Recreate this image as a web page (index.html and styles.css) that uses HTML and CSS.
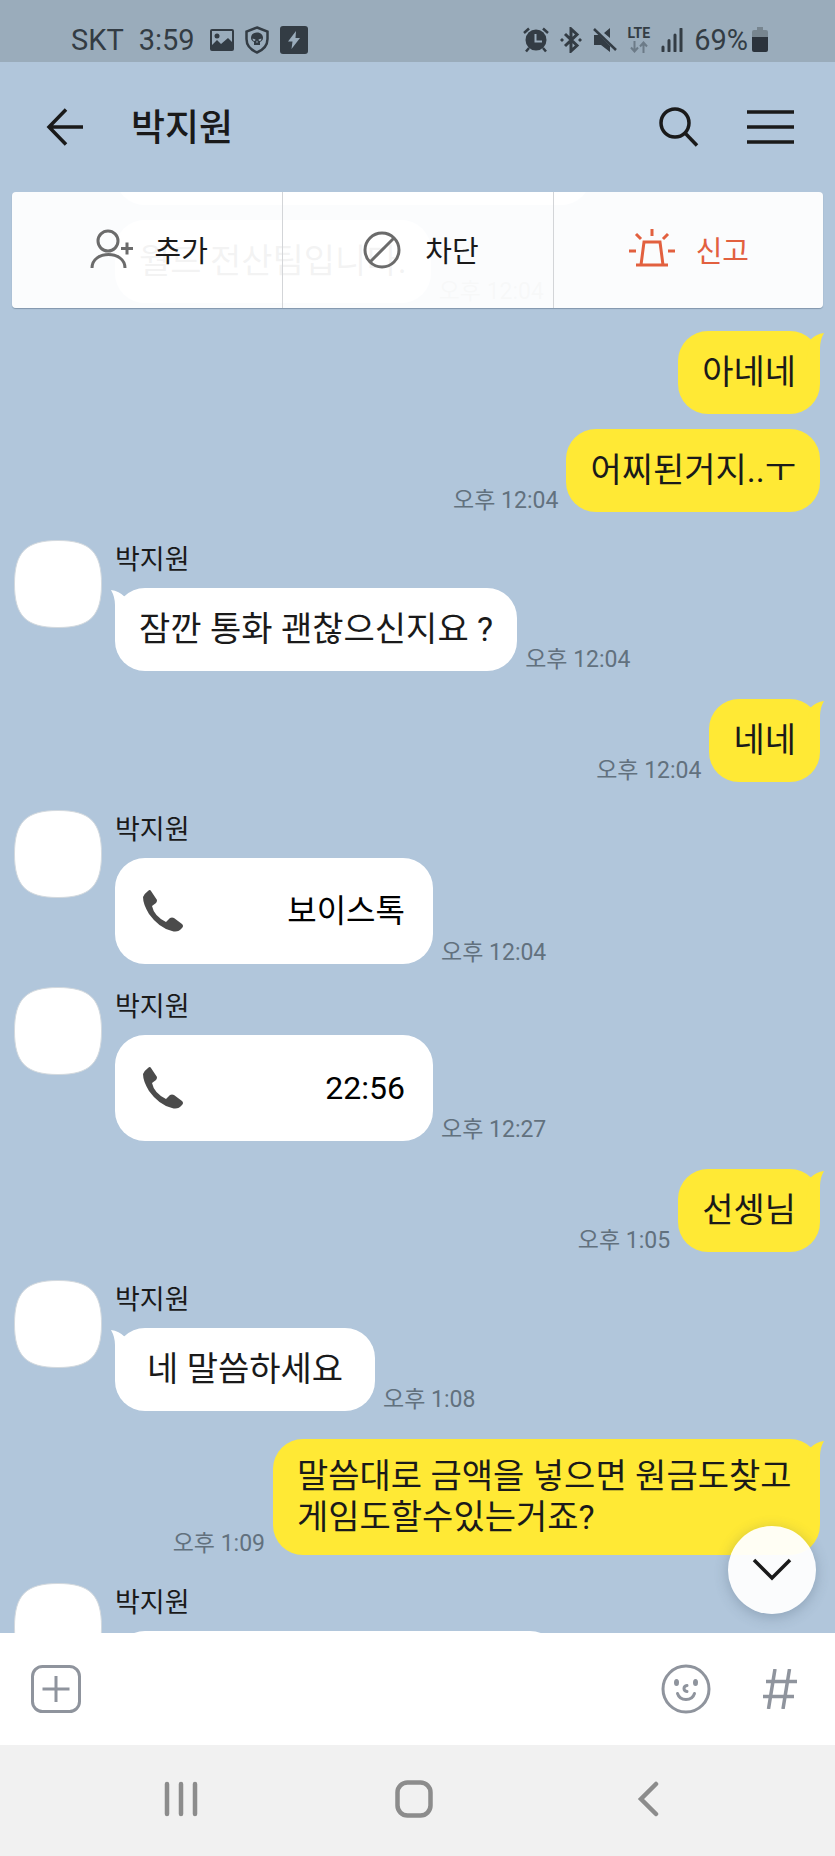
FILE: index.html
```html
<!DOCTYPE html>
<html lang="ko">
<head>
  <meta charset="UTF-8" />
  <meta name="viewport" content="width=device-width, initial-scale=1.0">
  <title>박지원</title>
  <link rel="stylesheet" href="styles.css">
</head>
<body>

<!-- Shared shapes -->
<svg class="defs" width="0" height="0" aria-hidden="true">
  <symbol id="avatar" viewBox="0 0 88 88">
    <path d="M44 .5C76 .5 87.5 12 87.5 44S76 87.5 44 87.5.5 76 .5 44 12 .5 44 .5Z" fill="#fff" stroke="#d3d9de"/>
  </symbol>
  <symbol id="tail" viewBox="0 0 26 32">
    <path d="M12 7Q18 1 26 0Q22 7 22 15V28H8Z" fill="currentColor"/>
  </symbol>
  <symbol id="phone" viewBox="0 0 40 42">
    <path d="M5 1Q7-1 8 1L14 10Q14 12 13 13L9 16Q11 26 23 32L27 28Q29 27 31 28L39 34Q41 36 39 38Q35 43 29 41Q16 38 6 24Q0 14 0 7Q1 4 5 1Z" fill="#4b4b4b"/>
  </symbol>
</svg>

<div class="phone">

  <!-- Status bar -->
  <div class="status-bar">
    <div class="status-left">
      <span>SKT</span>
      <span>3:59</span>
      <div class="status-notices">
        <svg width="24" height="22" viewBox="0 0 24 22">
          <path fill-rule="evenodd" fill="currentColor" d="M2 0H22Q24 0 24 2V20Q24 22 22 22H2Q0 22 0 20V2Q0 0 2 0ZM2 2V16L7 11L11 15L18 9L22 13V2Z"/>
          <circle cx="7" cy="7" r="2.5" fill="currentColor"/>
        </svg>
        <svg width="24" height="28" viewBox="0 0 24 28">
          <path d="M12 1.5L22.5 5.5V13Q22.5 22 12 26.5Q1.5 22 1.5 13V5.5Z" fill="none" stroke="currentColor" stroke-width="2.5"/>
          <path fill-rule="evenodd" fill="currentColor" d="M12 6.5C16 6.5 18 9 18 12Q18 14 16.5 15L15 16V19H9V16L7.5 15Q6 14 6 12C6 9 8 6.5 12 6.5ZM7.5 12.5L10.5 13.5L10 15L8 14.5ZM16.5 12.5L13.5 13.5L14 15L16 14.5ZM12 14.5L11 16.5H13Z"/>
        </svg>
        <svg width="28" height="28" viewBox="0 0 28 28">
          <rect width="28" height="28" rx="3" fill="currentColor"/>
          <path d="M16 5L8 15.5H12.5L11.5 23L20 12H15.5Z" fill="#9aacbb"/>
        </svg>
      </div>
    </div>
    <div class="status-right">
      <svg width="26" height="26" viewBox="0 0 26 26">
        <path d="M1 6L6 1.5M25 6L20 1.5M6 21L3 24.5M20 21L23 24.5" stroke="currentColor" stroke-width="2.5"/>
        <circle cx="13" cy="13" r="10.5" fill="currentColor"/>
        <path d="M12.5 7V14.5H19" fill="none" stroke="#9aacbb" stroke-width="2"/>
      </svg>
      <svg width="22" height="26" viewBox="0 0 22 26">
        <path d="M5 7L17 18.5L11 24V2L17 7.5L5 19" fill="none" stroke="currentColor" stroke-width="3"/>
        <path d="M0 13L2 11L4 13L2 15ZM18 13L20 11L22 13L20 15Z" fill="currentColor"/>
      </svg>
      <svg width="24" height="26" viewBox="0 0 24 26">
        <path d="M1 8H6L17 19V25L8 18H1ZM17 1V11L11 6Z" fill="currentColor"/>
        <path d="M1 2L23 23" stroke="currentColor" stroke-width="2.5"/>
      </svg>
      <div class="lte">
        <span>LTE</span>
        <svg width="18" height="12" viewBox="0 0 18 12">
          <path d="M4.5 0V10M1 6.5L4.5 10.5L8 6.5M13.5 12V2M10 5.5L13.5 1.5L17 5.5" fill="none" stroke="#6c7b88" stroke-width="2"/>
        </svg>
      </div>
      <svg width="22" height="24" viewBox="0 0 22 24">
        <path d="M2 19V23M8 12.5V23M14 7V23M20 1V23" stroke="currentColor" stroke-width="3" stroke-linecap="round"/>
      </svg>
      <div class="battery">
        <span>69%</span>
        <svg width="16" height="26" viewBox="0 0 16 26">
          <path d="M5 0H11V3H14Q16 3 16 5V11H0V5Q0 3 2 3H5Z" fill="#77858f"/>
          <path d="M0 10H16V23Q16 25 14 25H2Q0 25 0 23Z" fill="#2b333c"/>
        </svg>
      </div>
    </div>
  </div>

  <!-- Chat header -->
  <header class="chat-header">
    <button class="icon-btn" aria-label="뒤로">
      <svg width="38" height="38" viewBox="0 0 38 38" fill="none" stroke="#1a1a1a" stroke-width="3.5"><path d="M20 1.5L3 19L20 36.5M3 19H37"/></svg>
    </button>
    <h1>박지원</h1>
    <button class="icon-btn" aria-label="검색">
      <svg width="40" height="40" viewBox="0 0 40 40" fill="none" stroke="#1a1a1a" stroke-width="3.5"><circle cx="16" cy="16" r="14"/><path d="M26 26L38 38.5"/></svg>
    </button>
    <button class="icon-btn" aria-label="메뉴">
      <svg width="47" height="36" viewBox="0 0 47 36" stroke="#1a1a1a" stroke-width="3.5"><path d="M0 3H47M0 18H47M0 33H47"/></svg>
    </button>
  </header>

  <!-- Conversation -->
  <main class="chat">

    <!-- Unknown contact actions -->
    <div class="contact-actions">
      <button>
        <svg width="48" height="44" viewBox="0 0 48 44" fill="none" stroke="#6b6b6b" stroke-width="3">
          <circle cx="22" cy="13" r="10"/><path d="M6 40C6 22 39 22 39 40M35 20.5H47M41 14.5V26.5"/>
        </svg>
        <span>추가</span>
      </button>
      <button>
        <svg width="48" height="44" viewBox="0 0 48 44" fill="none" stroke="#6b6b6b" stroke-width="3">
          <circle cx="25" cy="22" r="17"/><path d="M13 34L37 10"/>
        </svg>
        <span>차단</span>
      </button>
      <button class="report">
        <svg width="48" height="44" viewBox="0 0 48 44" fill="none" stroke="#e2603f" stroke-width="3">
          <path d="M8 37H40M13 37L16 14H32L35 37M24 1V8M8 6L13 11M40 6L35 11M1 23H8M40 23H47"/>
        </svg>
        <span>신고</span>
      </button>
    </div>

    <div class="chat-list">
      <div class="msg received follow">
        <div class="bubble long"></div>
      </div>
      <div class="msg received follow">
        <div class="bubble">월드 전산팀입니다.</div>
        <time>오후 12:04</time>
      </div>

      <div class="msg sent">
        <div class="bubble">아네네<svg class="tail"><use href="#tail"/></svg></div>
      </div>
      <div class="msg sent follow">
        <time>오후 12:04</time>
        <div class="bubble">어찌된거지..ㅜ</div>
      </div>

      <div class="msg received">
        <svg class="avatar"><use href="#avatar"/></svg>
        <div class="body">
          <div class="name">박지원</div>
          <div class="line">
            <div class="bubble">잠깐 통화 괜찮으신지요 ?<svg class="tail"><use href="#tail"/></svg></div>
            <time>오후 12:04</time>
          </div>
        </div>
      </div>

      <div class="msg sent">
        <time>오후 12:04</time>
        <div class="bubble">네네<svg class="tail"><use href="#tail"/></svg></div>
      </div>

      <div class="msg received">
        <svg class="avatar"><use href="#avatar"/></svg>
        <div class="body">
          <div class="name">박지원</div>
          <div class="line">
            <div class="bubble call"><svg class="call-icon"><use href="#phone"/></svg>보이스톡</div>
            <time>오후 12:04</time>
          </div>
        </div>
      </div>

      <div class="msg received again">
        <svg class="avatar"><use href="#avatar"/></svg>
        <div class="body">
          <div class="name">박지원</div>
          <div class="line">
            <div class="bubble call"><svg class="call-icon"><use href="#phone"/></svg>22:56</div>
            <time>오후 12:27</time>
          </div>
        </div>
      </div>

      <div class="msg sent">
        <time>오후 1:05</time>
        <div class="bubble">선셍님<svg class="tail"><use href="#tail"/></svg></div>
      </div>

      <div class="msg received">
        <svg class="avatar"><use href="#avatar"/></svg>
        <div class="body">
          <div class="name">박지원</div>
          <div class="line">
            <div class="bubble">네 말씀하세요<svg class="tail"><use href="#tail"/></svg></div>
            <time>오후 1:08</time>
          </div>
        </div>
      </div>

      <div class="msg sent">
        <time>오후 1:09</time>
        <div class="bubble">말씀대로 금액을 넣으면 원금도찾고 게임도할수있는거죠?<svg class="tail"><use href="#tail"/></svg></div>
      </div>

      <div class="msg received">
        <svg class="avatar"><use href="#avatar"/></svg>
        <div class="body">
          <div class="name">박지원</div>
          <div class="line">
            <div class="bubble long"></div>
          </div>
        </div>
      </div>
    </div>

    <button class="scroll-down" aria-label="맨 아래로">
      <svg width="40" height="24" viewBox="0 0 40 24" fill="none" stroke="#1a1a1a" stroke-width="3.5"><path d="M2 2L20 20L38 2"/></svg>
    </button>
  </main>

  <!-- Input area -->
  <footer class="input-area">
    <button class="icon-btn" aria-label="첨부">
      <svg width="50" height="48" viewBox="0 0 50 48" fill="none" stroke="#8f949d" stroke-width="3">
        <rect x="1.5" y="1.5" width="47" height="45" rx="10"/><path d="M11.5 24H38.5M25 11V37"/>
      </svg>
    </button>
    <input type="text" aria-label="메시지 입력">
    <button class="icon-btn" aria-label="이모티콘">
      <svg width="50" height="50" viewBox="0 0 50 50" fill="none" stroke="#8f949d" stroke-width="3">
        <circle cx="25" cy="25" r="23"/>
        <path d="M16.5 29.5C19 37.5 31 37.5 33.5 29.5M26 21.5Q23 22 23 24.5T26 27.5" stroke-linecap="round"/>
        <ellipse cx="15.5" cy="18.5" rx="2.5" ry="3.5" fill="#8f949d" stroke="none"/>
        <ellipse cx="34.5" cy="18.5" rx="2.5" ry="3.5" fill="#8f949d" stroke="none"/>
      </svg>
    </button>
    <button class="icon-btn" aria-label="샵검색">
      <svg width="36" height="40" viewBox="0 0 36 40" fill="none" stroke="#8f949d" stroke-width="3.5">
        <path d="M13 0L6.5 40M27.5 0L21 40M4 12.5H35M1 27.5H32"/>
      </svg>
    </button>
  </footer>

  <!-- System navigation -->
  <nav class="system-nav">
    <button aria-label="최근 앱">
      <svg width="36" height="36" viewBox="0 0 36 36" stroke="#8c8c8c" stroke-width="4.5" stroke-linecap="round"><path d="M4 3V33M18 3V33M32 3V33"/></svg>
    </button>
    <button aria-label="홈">
      <svg width="38" height="38" viewBox="0 0 38 38" fill="none" stroke="#8c8c8c" stroke-width="4.5"><rect x="2.5" y="2.5" width="33" height="33" rx="10"/></svg>
    </button>
    <button aria-label="뒤로">
      <svg width="22" height="36" viewBox="0 0 22 36" fill="none" stroke="#8c8c8c" stroke-width="4.5" stroke-linecap="round"><path d="M19 3L4 18L19 33"/></svg>
    </button>
  </nav>

</div>

</body>
</html>
```

FILE: styles.css
```css
/* ----------  COLORS  ---------- */
:root {
  --chat-bg:    #b1c6db;
  --status-bg:  #9aacbb;
  --status-ink: #333c44;
  --kakao:      #ffe935;
  --ink:        #1a1a1a;
  --time:       #62717e;
  --report:     #e2603f;
}

*{box-sizing:border-box}

body{
  margin:0;
  background:var(--chat-bg);
  color:var(--ink);
  font-family:Roboto,"Noto Sans CJK KR",sans-serif;
}

svg{display:block; flex:none;}
.defs{position:absolute;}

button{
  padding:0; border:none; background:none;
  color:inherit; font:inherit; cursor:pointer;
}

.phone{
  height:100vh;
  display:flex; flex-direction:column;
}

/* ----------  STATUS BAR  ---------- */
.status-bar{
  height:62px; padding:18px 67px 0 71px;
  display:flex; justify-content:space-between; align-items:center;
  background:var(--status-bg); color:var(--status-ink);
  font-size:29px; line-height:32px;
}
.status-left,.status-right,.status-notices,.battery{
  display:flex; align-items:center;
}
.status-left{gap:15px;}
.status-notices{gap:11px;}
.status-right{gap:11px;}
.battery{gap:4px;}
.lte{
  display:flex; flex-direction:column; align-items:center; gap:2px;
  font-size:14px; line-height:12px; font-weight:700;
}

/* ----------  HEADER  ---------- */
.chat-header{
  height:130px; padding:0 41px 0 46px;
  display:flex; align-items:center;
}
.chat-header h1{
  flex:1; margin:0 0 0 47px; padding-top:4px;
  font-size:37px; line-height:44px; font-weight:500;
}
.chat-header .icon-btn + .icon-btn{margin-left:48px;}

/* ----------  CHAT  ---------- */
.chat{
  flex:1; min-height:0;
  position:relative; overflow:hidden;
}
.chat-list{
  margin-top:-70px; padding:0 15px 0 14px;
  display:flex; flex-direction:column;
}

.contact-actions{
  position:absolute; top:0; left:12px; right:12px; z-index:2;
  height:116px;
  display:grid; grid-template-columns:repeat(3,1fr);
  background:rgba(255,255,255,.95);
  border-radius:4px;
  box-shadow:0 1px 1px rgba(60,80,100,.4);
}
.contact-actions button{
  display:flex; justify-content:center; align-items:center; gap:20px;
  font-size:29px; line-height:36px;
}
.contact-actions span{padding-top:3px;}
.contact-actions button + button{border-left:1px solid #d3d5d8;}
.contact-actions .report{color:var(--report);}

.msg{
  display:flex; gap:8px;
  margin-top:28px;
}
.msg.follow{align-items:flex-end; margin-top:15px;}
.msg.again{margin-top:23px;}
.msg.follow:first-child{margin-top:0;}
.sent{justify-content:flex-end; align-items:flex-end;}
.received{gap:13px;}
.received.follow{padding-left:101px; gap:8px;}
.line{display:flex; align-items:flex-end; gap:8px;}

.avatar{width:88px; height:88px;}
.name{
  margin-bottom:8px;
  font-size:27px; line-height:40px;
}

.bubble{
  position:relative;
  min-height:83px; max-width:547px;
  padding:17px 24px;
  display:flex; align-items:center; justify-content:center;
  border-radius:30px;
  background:#fff; color:var(--ink);
  font-size:34px; line-height:41px;
  word-break:keep-all;
}
.body .bubble{min-width:260px;}
.sent .bubble{background:var(--kakao);}
.bubble.long{width:445px;}
.follow .bubble.long{width:476px;}

.tail{
  position:absolute; top:2px; right:-4px;
  width:26px; height:32px;
  color:var(--kakao);
}
.received .tail{
  right:auto; left:-4px;
  color:#fff; transform:scaleX(-1);
}

.bubble.call{
  width:318px; height:106px;
  justify-content:space-between; padding:0 28px;
  color:#000; font-size:32px;
}
.call-icon{width:40px; height:42px;}

time{
  flex:none;
  font-size:23px; line-height:22px;
  color:var(--time);
}

.scroll-down{
  position:absolute; right:19px; bottom:19px;
  width:88px; height:88px;
  display:flex; justify-content:center; align-items:center;
  border-radius:50%;
  background:rgba(255,255,255,.95);
  box-shadow:0 3px 14px rgba(60,80,100,.3);
}

/* ----------  INPUT AREA  ---------- */
.input-area{
  height:112px; padding:0 37px 0 31px;
  display:flex; align-items:center;
  background:#fff;
}
.input-area input{
  flex:1; min-width:0; height:72px; margin:0 24px;
  border:none; outline:none; background:none;
  font:inherit; font-size:34px;
}
.input-area .icon-btn + .icon-btn{margin-left:51px;}

/* ----------  SYSTEM NAV  ---------- */
.system-nav{
  height:111px; padding:0 70px 4px 64px;
  display:grid; grid-template-columns:repeat(3,1fr);
  background:#f1f1f1;
}
.system-nav button{
  display:flex; justify-content:center; align-items:center;
}
```
